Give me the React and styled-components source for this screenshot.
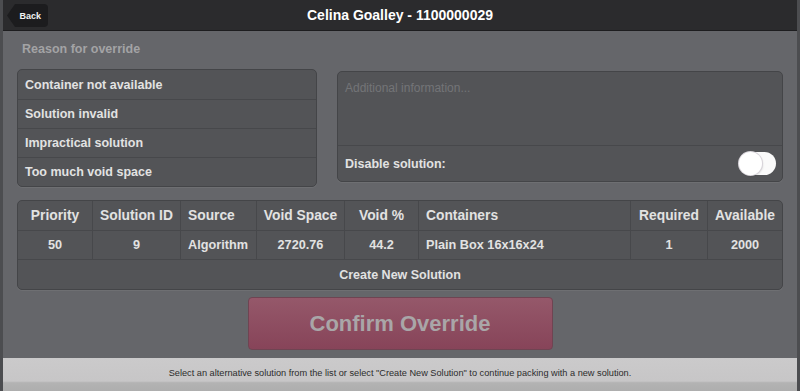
import React from 'react';
import styled, { createGlobalStyle } from 'styled-components';

const GlobalStyle = createGlobalStyle`
  html, body {
    margin: 0;
    padding: 0;
    background: #65666a;
  }
  * { box-sizing: border-box; }
  body {
    font-family: "Liberation Sans", Arial, sans-serif;
  }
`;

const Page = styled.div`
  width: 800px;
  height: 391px;
  display: flex;
  flex-direction: column;
  overflow: hidden;
  background: #65666a;
  border-left: 3px solid #4c4d50;
  border-right: 3px solid #4c4d50;
`;

const Header = styled.div`
  position: relative;
  height: 31px;
  flex: none;
  display: flex;
  align-items: center;
  justify-content: center;
  background: #2b2b2d;
  border-bottom: 1px solid #1d1d1f;
  margin: 0 -3px;
`;

const BackBtn = styled.div`
  position: absolute;
  left: 7px;
  top: 4px;
  height: 23px;
  width: 41px;
  display: flex;
  align-items: center;
  justify-content: flex-end;
  padding-right: 7px;
  color: #f2f2f2;
  font-size: 9px;
  font-weight: bold;
  background: #1c1c1e;
  border-radius: 4px;
  clip-path: polygon(8px 0, 100% 0, 100% 100%, 8px 100%, 0 50%);
`;

const Title = styled.div`
  color: #fff;
  font-size: 14px;
  font-weight: bold;
`;

const Body = styled.div`
  flex: 1;
  padding: 11px 14px 0;
  display: flex;
  flex-direction: column;
`;

const Label = styled.div`
  color: #a3a3a5;
  font-size: 12.5px;
  font-weight: bold;
  padding-left: 5px;
  height: 27px;
`;

const TopRow = styled.div`
  display: grid;
  grid-template-columns: 300px 446px;
  gap: 20px;
  align-items: start;
`;

const Panel = styled.div`
  background: #535457;
  border: 1px solid #444548;
  border-radius: 5px;
  overflow: hidden;
  box-shadow: 0 1px 0 rgba(255,255,255,0.06);
`;

const ReasonRow = styled.div`
  height: 29px;
  display: flex;
  align-items: center;
  padding: 0 7px;
  color: #e2e2e2;
  font-size: 12.5px;
  font-weight: bold;
  border-top: ${p => (p.first ? 'none' : '1px solid #47484b')};
`;

const InfoPanel = styled(Panel)`
  margin-top: 2px;
`;

const TextArea = styled.div`
  height: 74px;
  padding: 9px 7px;
  color: #737477;
  font-size: 12px;
  border-bottom: 1px solid #47484b;
`;

const DisableRow = styled.div`
  height: 35px;
  display: flex;
  align-items: center;
  justify-content: space-between;
  padding: 0 6px 0 7px;
  color: #e2e2e2;
  font-size: 12.5px;
  font-weight: bold;
`;

const Toggle = styled.div`
  position: relative;
  width: 37px;
  height: 23px;
  border-radius: 12px;
  background: #fafafa;
  &:after {
    content: '';
    position: absolute;
    left: 0;
    top: 0;
    width: 23px;
    height: 23px;
    border-radius: 50%;
    background: #fff;
    box-shadow: 0 0 0 1px #d8d4da, 1px 1px 2px rgba(0,0,0,0.15);
  }
`;

const Table = styled(Panel)`
  margin-top: 13px;
`;

const Grid = styled.div`
  display: grid;
  grid-template-columns: 74px 88px 76px 88px 74px 212px 77px 75px;
`;

const Cell = styled.div`
  height: ${p => (p.head ? '30px' : '29px')};
  display: flex;
  align-items: center;
  justify-content: ${p => (p.left ? 'flex-start' : 'center')};
  padding: 0 7px;
  color: #e2e2e2;
  font-size: ${p => (p.head ? '13.8px' : '12.7px')};
  font-weight: bold;
  white-space: nowrap;
  border-left: ${p => (p.first ? 'none' : '1px solid #47484b')};
  border-bottom: 1px solid #47484b;
`;

const CreateRow = styled.div`
  height: 29px;
  display: flex;
  align-items: center;
  justify-content: center;
  color: #e2e2e2;
  font-size: 12.5px;
  font-weight: bold;
`;

const ConfirmWrap = styled.div`
  display: flex;
  justify-content: center;
  padding-top: 7px;
`;

const ConfirmBtn = styled.div`
  width: 305px;
  height: 53px;
  display: flex;
  align-items: center;
  justify-content: center;
  border-radius: 4px;
  background: linear-gradient(#95586a, #874459);
  border: 1px solid #6f4452;
  color: #a9a6a8;
  font-size: 22px;
  font-weight: bold;
`;

const Footer = styled.div`
  flex: none;
  height: 33px;
  margin: 0 -3px;
  display: flex;
  align-items: flex-start;
  justify-content: center;
  padding-top: 10px;
  background: linear-gradient(#cbcacb 0, #c7c6c7 70%, #b3b3b3 75%, #aeaeae 100%);
  color: #2c2c2c;
  font-size: 9.2px;
`;

const reasons = [
  'Container not available',
  'Solution invalid',
  'Impractical solution',
  'Too much void space',
];

const headers = [
  { t: 'Priority' },
  { t: 'Solution ID' },
  { t: 'Source', left: true },
  { t: 'Void Space' },
  { t: 'Void %' },
  { t: 'Containers', left: true },
  { t: 'Required' },
  { t: 'Available' },
];

const row = ['50', '9', 'Algorithm', '2720.76', '44.2', 'Plain Box 16x16x24', '1', '2000'];

export default function App() {
  return (
    <>
      <GlobalStyle />
      <Page>
        <Header>
          <BackBtn>Back</BackBtn>
          <Title>Celina Goalley - 1100000029</Title>
        </Header>
        <Body>
          <Label>Reason for override</Label>
          <TopRow>
            <Panel>
              {reasons.map((r, i) => (
                <ReasonRow key={r} first={i === 0}>{r}</ReasonRow>
              ))}
            </Panel>
            <InfoPanel>
              <TextArea>Additional information...</TextArea>
              <DisableRow>
                <span>Disable solution:</span>
                <Toggle />
              </DisableRow>
            </InfoPanel>
          </TopRow>
          <Table>
            <Grid>
              {headers.map((h, i) => (
                <Cell key={h.t} head first={i === 0} left={h.left}>{h.t}</Cell>
              ))}
              {row.map((v, i) => (
                <Cell key={i} first={i === 0} left={headers[i].left}>{v}</Cell>
              ))}
            </Grid>
            <CreateRow>Create New Solution</CreateRow>
          </Table>
          <ConfirmWrap>
            <ConfirmBtn>Confirm Override</ConfirmBtn>
          </ConfirmWrap>
        </Body>
        <Footer>
          Select an alternative solution from the list or select "Create New Solution" to continue packing with a new solution.
        </Footer>
      </Page>
    </>
  );
}
